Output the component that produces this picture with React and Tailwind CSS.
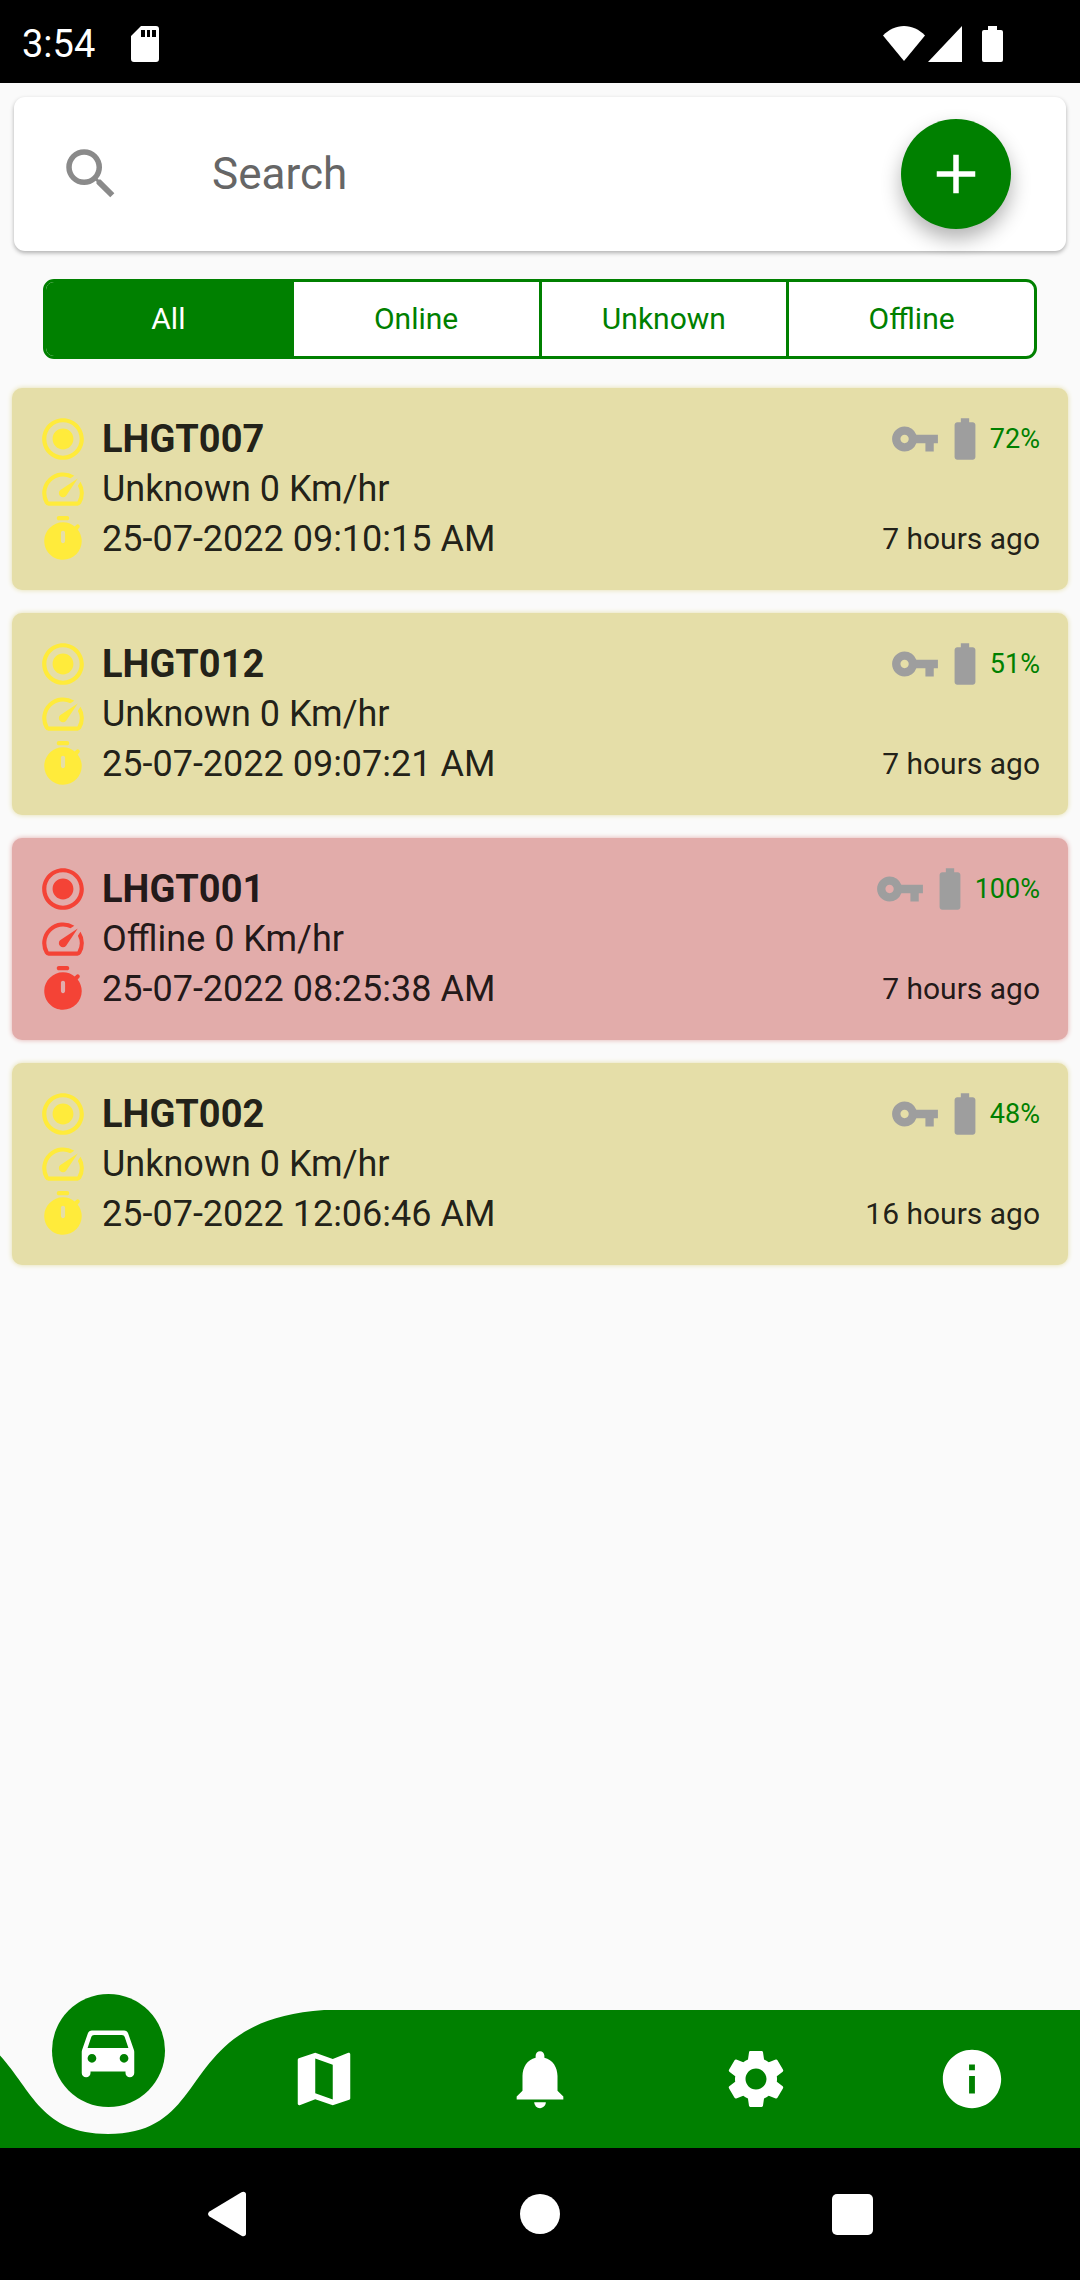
import { useState } from 'react'
import { MdSearch, MdAdd, MdRadioButtonChecked, MdSpeed, MdVpnKey, MdBatteryFull, MdNotifications, MdSettings, MdInfo } from 'react-icons/md'

const FILTERS = ['All', 'Online', 'Unknown', 'Offline']

const DEVICES = [
  { name: 'LHGT007', status: 'Unknown', speed: 0, time: '25-07-2022 09:10:15 AM', battery: 72, ago: '7 hours ago' },
  { name: 'LHGT012', status: 'Unknown', speed: 0, time: '25-07-2022 09:07:21 AM', battery: 51, ago: '7 hours ago' },
  { name: 'LHGT001', status: 'Offline', speed: 0, time: '25-07-2022 08:25:38 AM', battery: 100, ago: '7 hours ago' },
  { name: 'LHGT002', status: 'Unknown', speed: 0, time: '25-07-2022 12:06:46 AM', battery: 48, ago: '16 hours ago' },
]

const CARD_STYLE = {
  Online: 'bg-[#a9dcab] shadow-[0_0_5px_#a9dcab]',
  Unknown: 'bg-[#e5dea8] shadow-[0_0_5px_#e5dea8]',
  Offline: 'bg-[#e2acaa] shadow-[0_0_5px_#e2acaa]',
}

const ICON_STYLE = {
  Online: 'text-[#4caf50]',
  Unknown: 'text-[#ffeb3b]',
  Offline: 'text-[#f44336]',
}

function TimerIcon({ className }) {
  return (
    <svg viewBox="0 0 24 24" fill="currentColor" fillRule="evenodd" className={className} aria-hidden="true">
      <path d="M14 1h-4c-.55 0-1 .45-1 1s.45 1 1 1h4c.55 0 1-.45 1-1s-.45-1-1-1zm-2 13c.55 0 1-.45 1-1V9c0-.55-.45-1-1-1s-1 .45-1 1v4c0 .55.45 1 1 1zm7.03-6.61l.75-.75c.38-.38.39-1.01 0-1.4l-.01-.01c-.39-.39-1.01-.38-1.4 0l-.75.75C16.07 4.74 14.12 4 12 4c-4.8 0-8.88 3.96-9 8.76C2.87 17.84 6.94 22 12 22c4.98 0 9-4.03 9-9 0-2.12-.74-4.07-1.97-5.61z" />
    </svg>
  )
}

function CarIcon({ className }) {
  return (
    <svg viewBox="0 0 24 24" fill="currentColor" fillRule="evenodd" className={className} aria-hidden="true">
      <path d="M18.92 6.01C18.72 5.42 18.16 5 17.5 5h-11c-.66 0-1.21.42-1.42 1.01l-1.97 5.67c-.07.21-.11.43-.11.66v7.16c0 .83.67 1.5 1.5 1.5S6 20.33 6 19.5V19h12v.5c0 .82.67 1.5 1.5 1.5s1.5-.67 1.5-1.5v-7.16c0-.22-.04-.45-.11-.66l-1.97-5.67zM6.5 16c-.83 0-1.5-.67-1.5-1.5S5.67 13 6.5 13s1.5.67 1.5 1.5S7.33 16 6.5 16zm11 0c-.83 0-1.5-.67-1.5-1.5s.67-1.5 1.5-1.5 1.5.67 1.5 1.5-.67 1.5-1.5 1.5zM5 11l1.27-3.82c.14-.4.52-.68.95-.68h9.56c.43 0 .81.28.95.68L19 11H5z" />
    </svg>
  )
}

function MapIcon({ className }) {
  return (
    <svg viewBox="0 0 24 24" fill="currentColor" fillRule="evenodd" className={className} aria-hidden="true">
      <path d="M20.5 3l-.16.03L15 5.1 9 3 3.36 4.9c-.21.07-.36.25-.36.48V20.5c0 .28.22.5.5.5l.16-.03L9 18.9l6 2.1 5.64-1.9c.21-.07.36-.25.36-.48V3.5c0-.28-.22-.5-.5-.5zM15 19l-6-2.11V5l6 2.11V19z" />
    </svg>
  )
}

const TABS = [
  { id: 'devices', label: 'Devices', Icon: CarIcon },
  { id: 'map', label: 'Map', Icon: MapIcon },
  { id: 'alerts', label: 'Notifications', Icon: MdNotifications },
  { id: 'settings', label: 'Settings', Icon: MdSettings },
  { id: 'about', label: 'About', Icon: MdInfo },
]

function StatusBar() {
  return (
    <header className="h-[83px] shrink-0 bg-black text-white flex items-center pt-1 pl-[22px] pr-[77px]">
      <span className="text-[38px] leading-none">3:54</span>
      <svg viewBox="0 0 28 36" fill="currentColor" fillRule="evenodd" className="w-7 h-9 ml-9" aria-hidden="true">
        <path d="M10 0h15a3 3 0 0 1 3 3v30a3 3 0 0 1-3 3H3a3 3 0 0 1-3-3V10zM10 4v7h4V4zm6 0v7h3V4zm5 0v7h4V4z" />
      </svg>
      <div className="ml-auto flex items-center">
        <svg viewBox="0 0 42 36" fill="currentColor" className="w-[42px] h-9" aria-hidden="true">
          <path d="M21 35L0 9.5C6 3.5 13 0 21 0s15 3.5 21 9.5z" />
        </svg>
        <svg viewBox="0 0 34 36" fill="currentColor" className="w-[34px] h-9 ml-[3px]" aria-hidden="true">
          <path d="M34 0v36H0z" />
        </svg>
        <svg viewBox="0 0 21 36" fill="currentColor" className="w-[21px] h-9 ml-5" aria-hidden="true">
          <path d="M6 0h9v4h4a2 2 0 0 1 2 2v28a2 2 0 0 1-2 2H2a2 2 0 0 1-2-2V6a2 2 0 0 1 2-2h4z" />
        </svg>
      </div>
    </header>
  )
}

function SearchCard({ value, onChange }) {
  return (
    <div className="mx-[14px] mt-[14px] h-[154px] bg-white rounded-[11px] shadow-[0_2px_4px_rgba(0,0,0,0.3)] flex items-center pl-11 pr-[55px]">
      <label htmlFor="search" aria-label="Search">
        <MdSearch className="size-[66px] text-[#8a8a8a]" />
      </label>
      <input
        id="search"
        type="text"
        value={value}
        onChange={(e) => onChange(e.target.value)}
        placeholder="Search"
        className="flex-1 min-w-0 ml-[88px] text-[44px] text-black/87 placeholder:text-[#666666] focus:outline-none"
      />
      <button
        type="button"
        aria-label="Add device"
        className="size-[110px] shrink-0 rounded-full bg-[#008000] text-white flex items-center justify-center
          shadow-[0_10px_20px_rgba(0,0,0,0.3)]"
      >
        <MdAdd className="size-[66px]" />
      </button>
    </div>
  )
}

function FilterTabs({ active, onSelect }) {
  return (
    <div className="mx-[43px] mt-7 h-20 flex rounded-[11px] border-3 border-[#008000] bg-white overflow-hidden divide-x-3 divide-[#008000]">
      {FILTERS.map((f) => (
        <button
          key={f}
          type="button"
          onClick={() => onSelect(f)}
          className={`flex-1 basis-0 text-[30px] leading-none ${active === f ? 'bg-[#008000] text-white' : 'text-[#008000]'}`}
        >
          {f}
        </button>
      ))}
    </div>
  )
}

function DeviceCard({ device }) {
  const iconColor = ICON_STYLE[device.status]

  return (
    <li className={`rounded-[10px] py-[26px] pl-[26px] pr-7 text-black/87 ${CARD_STYLE[device.status]}`}>
      <div className="flex items-center h-[50px]">
        <MdRadioButtonChecked className={`size-[50px] mr-[14px] ${iconColor}`} />
        <h2 className="flex-1 text-[38px] leading-none font-bold">{device.name}</h2>
        <MdVpnKey className="size-[50px] text-[#9e9e9e]" />
        <MdBatteryFull className="size-[50px] text-[#9e9e9e]" />
        <span className="text-[27px] leading-none text-[#008000]">{device.battery}%</span>
      </div>
      <div className="flex items-center h-[50px]">
        <MdSpeed className={`size-[50px] mr-[14px] ${iconColor}`} />
        <p className="text-[36px] leading-none">{device.status} {device.speed} Km/hr</p>
      </div>
      <div className="flex items-center h-[50px]">
        <TimerIcon className={`size-[50px] mr-[14px] ${iconColor}`} />
        <p className="flex-1 text-[36px] leading-none">{device.time}</p>
        <span className="text-[30px] leading-none">{device.ago}</span>
      </div>
    </li>
  )
}

function BottomNav() {
  return (
    <nav className="relative h-[138px] shrink-0 text-white">
      <svg viewBox="0 0 1080 138" preserveAspectRatio="none" className="absolute inset-0 size-full" aria-hidden="true">
        <path d="M-108 0C43 10 0 124 108 124S173 10 324 0H1080V138H-108z" fill="#008000" />
      </svg>
      <div className="relative h-full grid grid-cols-5">
        {TABS.map(({ id, label, Icon }, i) => (
          <a key={id} href={`#${id}`} aria-label={label} className="relative flex items-center justify-center">
            {i === 0 ? (
              <span className="absolute bottom-[41px] size-[113px] rounded-full bg-[#008000] flex items-center justify-center">
                <Icon className="size-[70px]" />
              </span>
            ) : (
              <Icon className="size-[70px]" />
            )}
          </a>
        ))}
      </div>
    </nav>
  )
}

function SystemBar() {
  return (
    <footer className="h-[132px] shrink-0 bg-black text-white flex items-center justify-center gap-[272px]">
      <button type="button" aria-label="Back">
        <svg viewBox="0 0 40 46" fill="currentColor" className="w-10 h-[46px]" aria-hidden="true">
          <path d="M1.5 20.5L33.5 1.2C35.8 0 38 1 38 3.5v39c0 2.5-2.2 3.5-4.5 2.3L1.5 25.5c-2-1.5-2-3.5 0-5z" />
        </svg>
      </button>
      <button type="button" aria-label="Home" className="size-10 rounded-full bg-white" />
      <button type="button" aria-label="Recent apps" className="size-[41px] rounded-[5px] bg-white" />
    </footer>
  )
}

export default function App() {
  const [filter, setFilter] = useState('All')
  const [query, setQuery] = useState('')

  const devices = DEVICES.filter(
    (d) => (filter === 'All' || d.status === filter) && d.name.toLowerCase().includes(query.toLowerCase())
  )

  return (
    <div className="min-h-screen flex flex-col bg-[#fafafa] font-['Roboto',sans-serif]">
      <StatusBar />
      <main className="flex-1">
        <SearchCard value={query} onChange={setQuery} />
        <FilterTabs active={filter} onSelect={setFilter} />
        <ul className="mx-3 mt-[29px] mb-6 flex flex-col gap-[23px]">
          {devices.map((d) => <DeviceCard key={d.name} device={d} />)}
        </ul>
      </main>
      <BottomNav />
      <SystemBar />
    </div>
  )
}
